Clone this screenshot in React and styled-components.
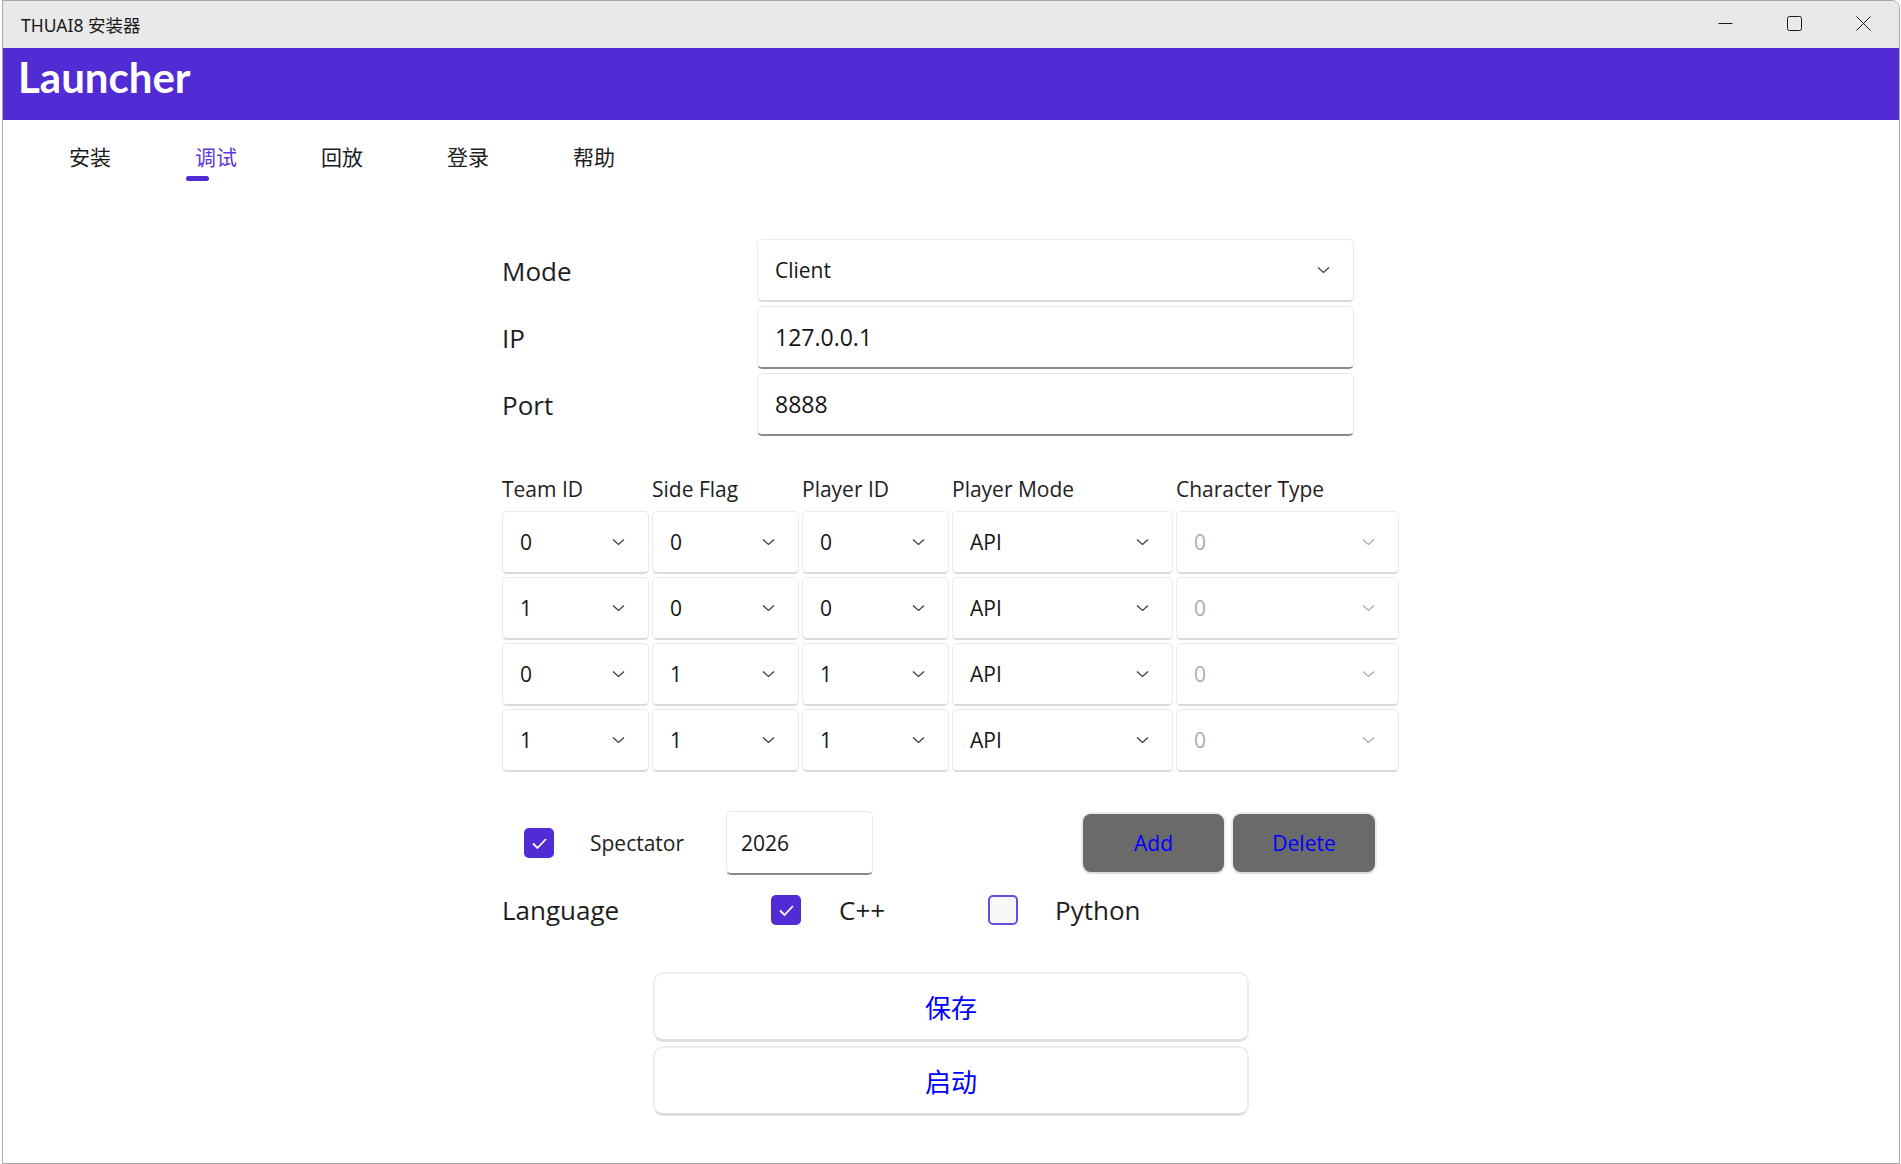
import styled, { createGlobalStyle } from "styled-components";

const GlobalStyle = createGlobalStyle`
  html, body {
    margin: 0;
    padding: 0;
    background: #ffffff;
  }
  body {
    font-family: "Open Sans", "Noto Sans CJK SC", sans-serif;
    color: #1c1c1c;
  }
  * {
    box-sizing: border-box;
  }
`;

const Window = styled.div`
  margin-left: 2px;
  width: 1898px;
  height: 1164px;
  border: 1px solid #a9a9a9;
  border-top-right-radius: 8px;
  overflow: hidden;
  display: flex;
  flex-direction: column;
  background: #ffffff;
`;

const TitleBar = styled.div`
  display: flex;
  align-items: center;
  height: 47px;
  flex-shrink: 0;
  padding-left: 18px;
  background: #e9e9e9;
`;

const TitleText = styled.span`
  font-family: "Noto Sans", "Noto Sans CJK SC", sans-serif;
  font-size: 17.5px;
  color: #1a1a1a;
`;

const Controls = styled.div`
  display: flex;
  align-items: center;
  gap: 54px;
  margin-left: auto;
  padding: 0 28px 2px 0;
  svg {
    display: block;
  }
`;

const Header = styled.div`
  height: 72px;
  flex-shrink: 0;
  padding: 4px 0 0 15px;
  background: #512bd4;
`;

const Brand = styled.h1`
  margin: 0;
  font-family: "Lato", "Noto Sans", sans-serif;
  font-weight: 700;
  font-size: 42px;
  line-height: 1.2;
  color: #ffffff;
`;

const TabBar = styled.div`
  display: flex;
  padding: 22px 0 0 24px;
`;

const Tab = styled.div`
  width: 126px;
  display: flex;
  flex-direction: column;
  align-items: center;
`;

const TabLabel = styled.span`
  font-family: "Noto Sans CJK SC", sans-serif;
  font-size: 21px;
  line-height: 28px;
  color: ${(p) => (p.$active ? "#5b36dc" : "#1c1c1c")};
`;

const Indicator = styled.span`
  align-self: flex-start;
  margin: 6px 0 0 33px;
  width: 23px;
  height: 5px;
  border-radius: 3px;
  background: #512bd4;
  visibility: ${(p) => (p.$active ? "visible" : "hidden")};
`;

const Form = styled.div`
  width: 898px;
  margin: 58px 0 0 calc(50% - 449px);
  display: flex;
  flex-direction: column;
`;

const FieldGrid = styled.div`
  display: grid;
  grid-template-columns: 255px 597px;
  grid-auto-rows: 63px;
  row-gap: 4px;
  align-items: center;
`;

const Label = styled.span`
  font-size: 26px;
  color: #1e1e1e;
  width: ${(p) => p.$w || "auto"};
  margin-left: ${(p) => p.$ml || "0"};
  flex-shrink: 0;
`;

const Box = styled.div`
  height: 63px;
  display: flex;
  align-items: center;
  justify-content: space-between;
  padding: 0 23px 0 17px;
  background: #ffffff;
  border: 1px solid #ebebeb;
  border-bottom: 2px solid ${(p) => (p.$entry ? "#8c8c8c" : "#dadada")};
  border-radius: 5px;
  font-size: ${(p) => p.$size || "21px"};
  color: ${(p) => (p.$disabled ? "#adadad" : "#151515")};
`;

const Table = styled.div`
  margin-top: 39px;
  display: grid;
  grid-template-columns: 147px 147px 147px 221px 223px;
  column-gap: 3px;
  row-gap: 3px;
`;

const HeadCell = styled.span`
  font-size: 21px;
  line-height: 28px;
  margin-bottom: 5px;
  color: #1e1e1e;
`;

const SpectatorRow = styled.div`
  margin-top: 39px;
  height: 64px;
  display: flex;
  align-items: center;
  padding-left: 22px;
`;

const SmallText = styled.span`
  font-size: 21px;
  color: #1e1e1e;
  margin-left: ${(p) => p.$ml || "0"};
  width: ${(p) => p.$w || "auto"};
  flex-shrink: 0;
`;

const YearBox = styled(Box)`
  width: 147px;
  height: 64px;
  padding-left: 14px;
`;

const GrayButton = styled.button`
  width: ${(p) => p.$w};
  height: 62px;
  margin-left: ${(p) => p.$ml || "0"};
  background: #6a6a6a;
  border: 2px solid #ececec;
  border-bottom-color: #dcdcdc;
  border-radius: 10px;
  font-family: "Open Sans", sans-serif;
  font-size: 21px;
  color: #0000ff;
  padding: 0;
`;

const LanguageRow = styled.div`
  margin-top: 17px;
  height: 36px;
  display: flex;
  align-items: center;
`;

const Check = styled.span`
  width: 30px;
  height: 30px;
  flex-shrink: 0;
  display: flex;
  align-items: center;
  justify-content: center;
  border-radius: 5px;
  background: ${(p) => (p.$on ? "#512bd4" : "#f7f7f7")};
  border: ${(p) => (p.$on ? "none" : "2px solid #6a4be0")};
`;

const Actions = styled.div`
  margin-top: 44px;
  align-self: center;
  display: flex;
  flex-direction: column;
  gap: 4px;
`;

const ActionButton = styled.button`
  width: 596px;
  height: 70px;
  background: #ffffff;
  border: 2px solid #ededed;
  border-bottom: 3px solid #dedede;
  border-radius: 10px;
  font-family: "Noto Sans CJK SC", sans-serif;
  font-size: 26px;
  color: #0000ff;
  padding: 0;
`;

const Chevron = ({ color = "#3a3a3a" }) => (
  <svg width="13" height="8" viewBox="0 0 13 8">
    <polyline points="1,1.5 6.5,6.5 12,1.5" fill="none" stroke={color} strokeWidth="1.2" />
  </svg>
);

const Tick = () => (
  <svg width="17" height="13" viewBox="0 0 17 13">
    <polyline points="2,6.5 6.5,11 15,2" fill="none" stroke="#ffffff" strokeWidth="1.8" />
  </svg>
);

const CheckBox = ({ on }) => <Check $on={on}>{on && <Tick />}</Check>;

const tabs = ["安装", "调试", "回放", "登录", "帮助"];

const players = [
  ["0", "0", "0", "API", "0"],
  ["1", "0", "0", "API", "0"],
  ["0", "1", "1", "API", "0"],
  ["1", "1", "1", "API", "0"],
];

const heads = ["Team ID", "Side Flag", "Player ID", "Player Mode", "Character Type"];

const App = () => {
  return (
    <>
      <GlobalStyle />
      <Window>
        <TitleBar>
          <TitleText>THUAI8 安装器</TitleText>
          <Controls>
            <svg width="15" height="15" viewBox="0 0 15 15">
              <line x1="0.5" y1="7.5" x2="14.5" y2="7.5" stroke="#1a1a1a" strokeWidth="1" />
            </svg>
            <svg width="15" height="15" viewBox="0 0 15 15">
              <rect x="0.5" y="0.5" width="14" height="14" rx="2" fill="none" stroke="#1a1a1a" strokeWidth="1" />
            </svg>
            <svg width="15" height="15" viewBox="0 0 15 15">
              <path d="M0.5 0.5 L14.5 14.5 M14.5 0.5 L0.5 14.5" stroke="#1a1a1a" strokeWidth="1" />
            </svg>
          </Controls>
        </TitleBar>

        <Header>
          <Brand>Launcher</Brand>
        </Header>

        <TabBar>
          {tabs.map((t, i) => (
            <Tab key={t}>
              <TabLabel $active={i === 1}>{t}</TabLabel>
              <Indicator $active={i === 1} />
            </Tab>
          ))}
        </TabBar>

        <Form>
          <FieldGrid>
            <Label>Mode</Label>
            <Box>
              <span>Client</span>
              <Chevron />
            </Box>
            <Label>IP</Label>
            <Box $entry $size="23px">127.0.0.1</Box>
            <Label>Port</Label>
            <Box $entry $size="23px">8888</Box>
          </FieldGrid>

          <Table>
            {heads.map((h) => (
              <HeadCell key={h}>{h}</HeadCell>
            ))}
            {players.map((row, r) =>
              row.map((v, c) => (
                <Box key={`${r}-${c}`} $disabled={c === 4}>
                  <span>{v}</span>
                  <Chevron color={c === 4 ? "#a8a8a8" : "#3a3a3a"} />
                </Box>
              ))
            )}
          </Table>

          <SpectatorRow>
            <CheckBox on />
            <SmallText $ml="36px" $w="136px">
              Spectator
            </SmallText>
            <YearBox $entry>2026</YearBox>
            <GrayButton $w="145px" $ml="208px">
              Add
            </GrayButton>
            <GrayButton $w="146px" $ml="5px">
              Delete
            </GrayButton>
          </SpectatorRow>

          <LanguageRow>
            <Label $w="269px">Language</Label>
            <CheckBox on />
            <Label $w="149px" $ml="38px">
              C++
            </Label>
            <CheckBox />
            <Label $ml="37px">Python</Label>
          </LanguageRow>

          <Actions>
            <ActionButton>保存</ActionButton>
            <ActionButton>启动</ActionButton>
          </Actions>
        </Form>
      </Window>
    </>
  );
};

export default App;
